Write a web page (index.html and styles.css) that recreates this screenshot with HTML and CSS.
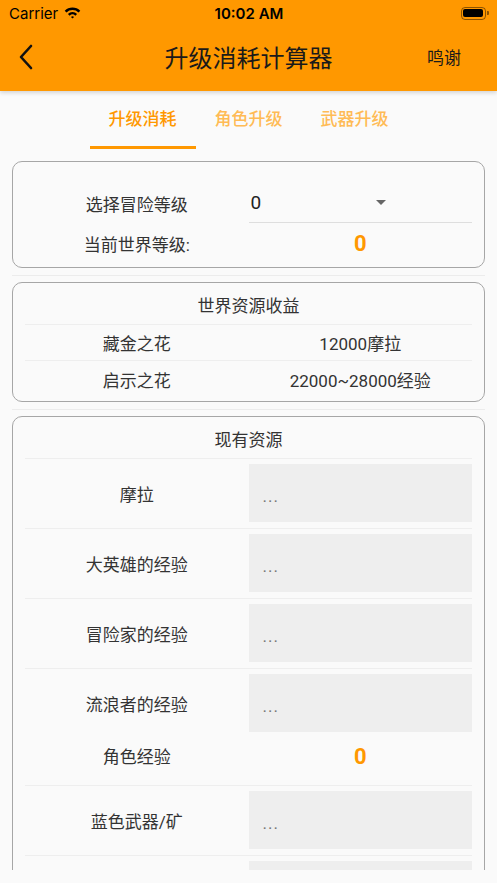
FILE: index.html
```html
<!DOCTYPE html>
<html lang="zh-CN">
<head>
    <meta charset="UTF-8">
    <meta name="viewport" content="width=device-width, initial-scale=1.0">
    <title>升级消耗计算器</title>
    <link rel="stylesheet" href="styles.css">
</head>
<body>
    <div class="screen">
        <header class="top">
            <div class="status">
                <div class="status-left">
                    <span>Carrier</span>
                    <svg class="wifi" width="17" height="12" viewBox="0 0 17 12">
                        <path d="M0.72 3.72 A11 11 0 0 1 16.28 3.72 L14.51 5.49 A8.5 8.5 0 0 0 2.49 5.49 Z"/>
                        <path d="M3.9 6.9 A6.5 6.5 0 0 1 13.1 6.9 L11.33 8.67 A4 4 0 0 0 5.67 8.67 Z"/>
                        <path d="M8.5 11.6 L6.94 9.94 A2.2 2.2 0 0 1 10.06 9.94 Z"/>
                    </svg>
                </div>
                <div class="status-time">10:02 AM</div>
                <div class="status-right">
                    <span class="battery"><span class="battery-level"></span></span>
                    <span class="battery-nub"></span>
                </div>
            </div>
            <div class="appbar">
                <button class="back" aria-label="返回">
                    <svg width="16" height="26" viewBox="0 0 16 26">
                        <polyline points="13,2 3,13 13,24" fill="none" stroke="#111" stroke-width="2.6" stroke-linecap="round" stroke-linejoin="round"/>
                    </svg>
                </button>
                <h1>升级消耗计算器</h1>
                <span class="action">鸣谢</span>
            </div>
        </header>

        <nav class="tabs">
            <span class="tab active">升级消耗</span>
            <span class="tab">角色升级</span>
            <span class="tab">武器升级</span>
        </nav>

        <main class="content">
            <section class="card card-level">
                <div class="row">
                    <div class="cell label">选择冒险等级</div>
                    <div class="cell select">
                        <div class="select-inner">
                            <span class="select-value">0</span>
                            <span class="select-arrow"></span>
                        </div>
                    </div>
                </div>
                <div class="row">
                    <div class="cell label">当前世界等级:</div>
                    <div class="cell value-hl">0</div>
                </div>
            </section>

            <div class="sep"></div>

            <section class="card">
                <div class="card-title">世界资源收益</div>
                <div class="row line">
                    <div class="cell label">藏金之花</div>
                    <div class="cell value">12000摩拉</div>
                </div>
                <div class="row">
                    <div class="cell label">启示之花</div>
                    <div class="cell value">22000~28000经验</div>
                </div>
            </section>

            <div class="sep"></div>

            <section class="card">
                <div class="card-title">现有资源</div>
                <div class="input-row line">
                    <div class="cell label">摩拉</div>
                    <div class="cell"><input class="field" placeholder="..."></div>
                </div>
                <div class="input-row line">
                    <div class="cell label">大英雄的经验</div>
                    <div class="cell"><input class="field" placeholder="..."></div>
                </div>
                <div class="input-row line">
                    <div class="cell label">冒险家的经验</div>
                    <div class="cell"><input class="field" placeholder="..."></div>
                </div>
                <div class="input-row">
                    <div class="cell label">流浪者的经验</div>
                    <div class="cell"><input class="field" placeholder="..."></div>
                </div>
                <div class="row total line">
                    <div class="cell label">角色经验</div>
                    <div class="cell value-hl">0</div>
                </div>
                <div class="input-row line">
                    <div class="cell label">蓝色武器/矿</div>
                    <div class="cell"><input class="field" placeholder="..."></div>
                </div>
                <div class="input-row">
                    <div class="cell label"></div>
                    <div class="cell"><input class="field"></div>
                </div>
            </section>
        </main>
    </div>
</body>
</html>
```

FILE: styles.css
```css
* {
    box-sizing: border-box;
}

body {
    margin: 0;
    background: #fafafa;
    font-family: Roboto, "Noto Sans CJK SC", sans-serif;
    color: #333;
}

.screen {
    height: 883px;
    display: flex;
    flex-direction: column;
    overflow: hidden;
}

/* 顶部：状态栏 + 标题栏 */
.top {
    background: #ff9800;
    box-shadow: 0 2px 4px rgba(0, 0, 0, 0.15);
    position: relative;
    z-index: 1;
}

.status {
    height: 26px;
    display: flex;
    align-items: center;
    justify-content: space-between;
    padding: 0 8px 0 9px;
    font-family: Inter, "Liberation Sans", sans-serif;
    font-size: 15px;
    color: #000;
}

.status-left {
    display: flex;
    align-items: center;
    gap: 6px;
    width: 120px;
}

.wifi {
    fill: #000;
}

.status-time {
    font-weight: 600;
}

.status-right {
    width: 120px;
    display: flex;
    justify-content: flex-end;
    align-items: center;
}

.battery {
    width: 25px;
    height: 13px;
    border: 1px solid rgba(0, 0, 0, 0.45);
    border-radius: 4px;
    padding: 1.5px;
    display: flex;
}

.battery-level {
    flex: 1;
    background: #000;
    border-radius: 2px;
}

.battery-nub {
    width: 2px;
    height: 4px;
    margin-left: 1px;
    background: rgba(0, 0, 0, 0.45);
    border-radius: 0 1px 1px 0;
}

.appbar {
    height: 65px;
    display: flex;
    align-items: center;
    justify-content: space-between;
    padding: 0 36px 4px 15px;
}

.back {
    width: 69px;
    padding: 0 0 0 3px;
    background: none;
    border: none;
    text-align: left;
    display: flex;
}

.appbar h1 {
    margin: 0;
    font-size: 24px;
    font-weight: 400;
    color: #1a1a1a;
    font-family: "Noto Sans CJK SC", sans-serif;
}

.action {
    width: 48px;
    text-align: right;
    font-size: 17px;
    color: #1a1a1a;
}

/* 标签页 */
.tabs {
    height: 58px;
    display: flex;
    justify-content: center;
}

.tab {
    width: 106px;
    padding-top: 14px;
    text-align: center;
    font-size: 17px;
    font-weight: 500;
    line-height: 28px;
    color: #ffbb55;
    border-bottom: 3px solid transparent;
}

.tab.active {
    color: #ff9800;
    border-bottom-color: #ff9800;
}

/* 内容 */
.content {
    flex: 1;
    overflow: hidden;
    margin-bottom: 13px;
    padding-top: 12px;
}

.card {
    margin: 0 12px;
    padding: 0 12px 4px;
    border: 1px solid #a6a6a6;
    border-radius: 10px;
    background: #fafafa;
}

.card-level {
    padding-top: 21px;
}

.sep {
    height: 1px;
    margin: 7px 12px 6px;
    background: #ececec;
}

.card-title {
    height: 42px;
    padding-top: 6px;
    line-height: 35px;
    text-align: center;
    font-size: 17px;
    border-bottom: 1px solid #eeeeee;
}

.row {
    display: flex;
    height: 36px;
    align-items: center;
    font-size: 17px;
}

.card-level .row {
    height: 40px;
}

.line {
    border-bottom: 1px solid #eeeeee;
}

.cell {
    flex: 1;
    text-align: center;
}

.label {
    color: #333;
}

.value {
    color: #333;
}

.value-hl {
    color: #ff9800;
    font-weight: 700;
    font-size: 22px;
}

.select {
    align-self: stretch;
    display: flex;
    align-items: center;
    border-bottom: 1px solid #dedede;
}

.select-inner {
    width: 135px;
    margin-left: 2px;
    display: flex;
    justify-content: space-between;
    align-items: center;
}

.select-value {
    font-size: 19px;
    color: #222;
}

.select-arrow {
    width: 0;
    height: 0;
    border-left: 5.5px solid transparent;
    border-right: 5.5px solid transparent;
    border-top: 5.5px solid #666;
}

.input-row {
    display: flex;
    align-items: center;
    padding: 5px 0 6px;
    font-size: 17px;
}

.field {
    display: block;
    width: 100%;
    height: 58px;
    border: none;
    background: #eeeeee;
    padding: 6px 14px 0;
    font-family: Roboto, "Noto Sans CJK SC", sans-serif;
    font-size: 17px;
    letter-spacing: 1px;
    outline: none;
}

.field::placeholder {
    color: #777;
}

.row.total {
    height: 48px;
    align-items: flex-start;
    padding-top: 2px;
}

.row.total .cell {
    line-height: 34px;
}
```
